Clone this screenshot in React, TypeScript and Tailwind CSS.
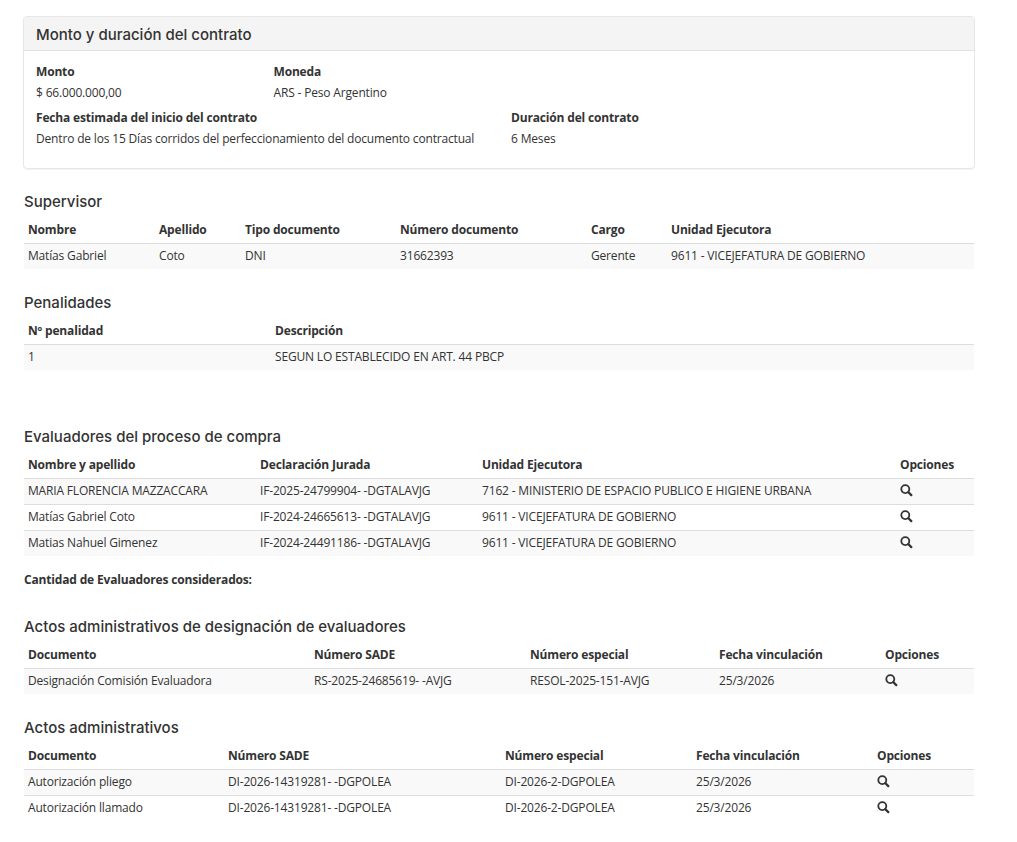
import type { ReactNode } from 'react'
import { clsx } from 'clsx'

interface Column {
  label: string
  width: string
}

interface DataTableProps {
  columns: Column[]
  rows: ReactNode[][]
}

function SearchIcon() {
  return (
    <svg viewBox="0 0 13 13" className="block h-[13px] w-[13px]" fill="none" stroke="#333333">
      <circle cx="5.3" cy="5.1" r="4" strokeWidth="1.8" />
      <path d="M8.4 8.2L11.3 11.1" strokeWidth="2.3" strokeLinecap="round" />
    </svg>
  )
}

function ViewButton() {
  return (
    <button type="button" aria-label="Ver" className="flex h-[17px] cursor-pointer items-start pt-[2px]">
      <SearchIcon />
    </button>
  )
}

function SectionTitle({ children }: { children: ReactNode }) {
  return <h4 className="h-5 font-['Inter'] text-[15px] leading-[22px] font-medium tracking-normal">{children}</h4>
}

function DataTable({ columns, rows }: DataTableProps) {
  return (
    <table className="mt-[6px] w-full table-fixed border-collapse text-left">
      <colgroup>
        {columns.map((column) => (
          <col key={column.label} className={column.width} />
        ))}
      </colgroup>
      <thead>
        <tr className="h-[26px]">
          {columns.map((column) => (
            <th key={column.label} className="px-1 py-0 font-bold whitespace-nowrap">
              {column.label}
            </th>
          ))}
        </tr>
      </thead>
      <tbody>
        {rows.map((row, index) => (
          <tr key={index} className={clsx('h-[26px] border-t border-[#dddddd]', index % 2 === 0 && 'bg-[#f9f9f9]')}>
            {row.map((cell, cellIndex) => (
              <td key={cellIndex} className="px-1 pt-0 pb-[2px] whitespace-nowrap">
                {cell}
              </td>
            ))}
          </tr>
        ))}
      </tbody>
    </table>
  )
}

function Field({ label, value, className = '' }: { label: string; value: string; className?: string }) {
  return (
    <div className={clsx('whitespace-nowrap', className)}>
      <div className="h-[21px] font-bold">{label}</div>
      <div className="h-[25px]">{value}</div>
    </div>
  )
}

const SUPERVISOR_COLUMNS = [
  { label: 'Nombre', width: 'w-[131px]' },
  { label: 'Apellido', width: 'w-[86px]' },
  { label: 'Tipo documento', width: 'w-[155px]' },
  { label: 'Número documento', width: 'w-[191px]' },
  { label: 'Cargo', width: 'w-[80px]' },
  { label: 'Unidad Ejecutora', width: 'w-[307px]' }
]

const PENALTY_COLUMNS = [
  { label: 'Nº penalidad', width: 'w-[247px]' },
  { label: 'Descripción', width: 'w-[703px]' }
]

const EVALUATOR_COLUMNS = [
  { label: 'Nombre y apellido', width: 'w-[232px]' },
  { label: 'Declaración Jurada', width: 'w-[222px]' },
  { label: 'Unidad Ejecutora', width: 'w-[418px]' },
  { label: 'Opciones', width: 'w-[78px]' }
]

const DESIGNATION_COLUMNS = [
  { label: 'Documento', width: 'w-[286px]' },
  { label: 'Número SADE', width: 'w-[216px]' },
  { label: 'Número especial', width: 'w-[189px]' },
  { label: 'Fecha vinculación', width: 'w-[166px]' },
  { label: 'Opciones', width: 'w-[93px]' }
]

const ACT_COLUMNS = [
  { label: 'Documento', width: 'w-[200px]' },
  { label: 'Número SADE', width: 'w-[277px]' },
  { label: 'Número especial', width: 'w-[191px]' },
  { label: 'Fecha vinculación', width: 'w-[181px]' },
  { label: 'Opciones', width: 'w-[101px]' }
]

export default function App() {
  return (
    <main className="min-h-screen bg-white pt-4 pl-6 font-['Open_Sans',sans-serif] text-[12px] leading-[17px] tracking-[-0.17px] text-[#333333]">
      <div className="w-[950px]">
        <section className="-mx-px h-[153px] w-[952px] overflow-hidden rounded border border-[#e7e7e7] shadow-[0_1px_1px_rgba(0,0,0,0.05)]">
          <div className="flex h-[34px] items-center border-b border-[#e2e2e2] bg-[#f4f4f4] px-3">
            <SectionTitle>Monto y duración del contrato</SectionTitle>
          </div>
          <div className="px-3 pt-3">
            <div className="flex">
              <Field label="Monto" value="$ 66.000.000,00" className="w-[237.5px]" />
              <Field label="Moneda" value="ARS - Peso Argentino" />
            </div>
            <div className="flex">
              <Field
                label="Fecha estimada del inicio del contrato"
                value="Dentro de los 15 Días corridos del perfeccionamiento del documento contractual"
                className="w-[475px]"
              />
              <Field label="Duración del contrato" value="6 Meses" />
            </div>
          </div>
        </section>

        <section className="mt-[22px]">
          <SectionTitle>Supervisor</SectionTitle>
          <DataTable
            columns={SUPERVISOR_COLUMNS}
            rows={[['Matías Gabriel', 'Coto', 'DNI', '31662393', 'Gerente', '9611 - VICEJEFATURA DE GOBIERNO']]}
          />
        </section>

        <section className="mt-[23px]">
          <SectionTitle>Penalidades</SectionTitle>
          <DataTable columns={PENALTY_COLUMNS} rows={[['1', 'SEGUN LO ESTABLECIDO EN ART. 44 PBCP']]} />
        </section>

        <section className="mt-14">
          <SectionTitle>Evaluadores del proceso de compra</SectionTitle>
          <DataTable
            columns={EVALUATOR_COLUMNS}
            rows={[
              [
                'MARIA FLORENCIA MAZZACCARA',
                'IF-2025-24799904- -DGTALAVJG',
                '7162 - MINISTERIO DE ESPACIO PUBLICO E HIGIENE URBANA',
                <ViewButton />
              ],
              ['Matías Gabriel Coto', 'IF-2024-24665613- -DGTALAVJG', '9611 - VICEJEFATURA DE GOBIERNO', <ViewButton />],
              ['Matias Nahuel Gimenez', 'IF-2024-24491186- -DGTALAVJG', '9611 - VICEJEFATURA DE GOBIERNO', <ViewButton />]
            ]}
          />
          <p className="mt-[15px] font-bold">Cantidad de Evaluadores considerados:</p>
        </section>

        <section className="mt-7">
          <SectionTitle>Actos administrativos de designación de evaluadores</SectionTitle>
          <DataTable
            columns={DESIGNATION_COLUMNS}
            rows={[
              [
                'Designación Comisión Evaluadora',
                'RS-2025-24685619- -AVJG',
                'RESOL-2025-151-AVJG',
                '25/3/2026',
                <ViewButton />
              ]
            ]}
          />
        </section>

        <section className="mt-[23px]">
          <SectionTitle>Actos administrativos</SectionTitle>
          <DataTable
            columns={ACT_COLUMNS}
            rows={[
              ['Autorización pliego', 'DI-2026-14319281- -DGPOLEA', 'DI-2026-2-DGPOLEA', '25/3/2026', <ViewButton />],
              ['Autorización llamado', 'DI-2026-14319281- -DGPOLEA', 'DI-2026-2-DGPOLEA', '25/3/2026', <ViewButton />]
            ]}
          />
        </section>
      </div>
    </main>
  )
}
